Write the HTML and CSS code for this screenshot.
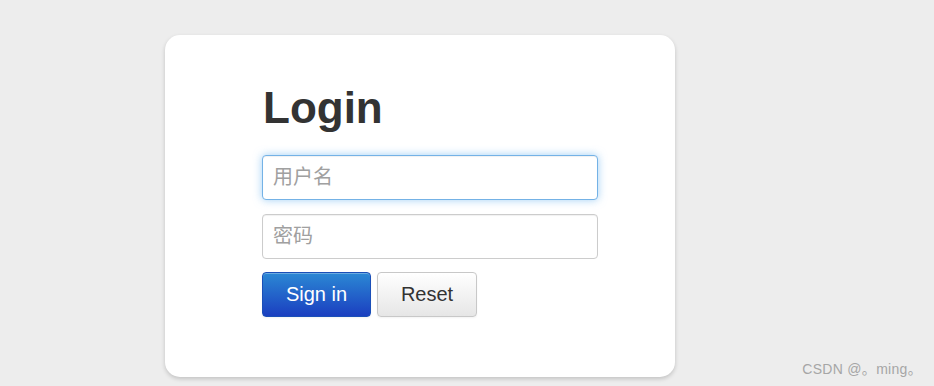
FILE: index.html
```html
<!DOCTYPE html>
<html>
	<head>
		<meta charset="utf-8" />
		<title>Login</title>
		<link rel="stylesheet" href="styles.css">
	</head>
	<body>
		<div class="login-box">
			<h1 class="title">Login</h1>
			<form class="login-form">
				<input type="text" class="field focus" placeholder="用户名">
				<input type="password" class="field" placeholder="密码">
				<div class="actions">
					<button type="button" class="btn btn-primary">Sign in</button>
					<button type="reset" class="btn">Reset</button>
				</div>
			</form>
		</div>
		<div class="mark">CSDN @。ming。</div>
	</body>
</html>
```
FILE: styles.css
```css
* {
	padding: 0px;
	margin: 0px;
	box-sizing: border-box;
}
html,
body {
	height: 100%;
}
body {
	background-color: #ededed;
	font-family: "Liberation Sans", Arial, "Noto Sans CJK SC", sans-serif;
	padding: 35px 0 0 165px;
	position: relative;
	overflow: hidden;
}
.login-box {
	width: 510px;
	background-color: #fff;
	border-radius: 15px;
	box-shadow: 0 2px 4px rgba(0, 0, 0, 0.18);
	padding: 48px 77px 60px 97px;
}
.title {
	font-size: 44px;
	line-height: 50px;
	font-weight: bold;
	color: #333;
	margin-bottom: 22px;
	padding-left: 1px;
}
.login-form {
	display: flex;
	flex-direction: column;
}
.field {
	width: 336px;
	height: 45px;
	border: 1px solid #ccc;
	border-radius: 4px;
	padding: 0 10px;
	font-size: 20px;
	font-family: "Liberation Sans", Arial, "Noto Sans CJK SC", sans-serif;
	color: #555;
	margin-bottom: 14px;
	outline: none;
	box-shadow: inset 0 1px 1px rgba(0, 0, 0, 0.06);
}
.field::placeholder {
	color: #a0a0a0;
}
.field.focus {
	border-color: #74b2e6;
	box-shadow: inset 0 1px 1px rgba(0, 0, 0, 0.06), 0 0 8px rgba(82, 168, 236, 0.55);
}
.actions {
	display: flex;
	gap: 6px;
	margin-top: -1px;
}
.btn {
	height: 45px;
	width: 100px;
	border: 1px solid #c8c8c8;
	border-radius: 4px;
	font-size: 20px;
	font-family: "Liberation Sans", Arial, sans-serif;
	color: #333;
	background: linear-gradient(#ffffff, #e6e6e6);
	box-shadow: inset 0 1px 0 rgba(255, 255, 255, 0.3), 0 1px 2px rgba(0, 0, 0, 0.05);
	cursor: pointer;
}
.btn-primary {
	width: 109px;
	color: #fff;
	border-color: #1a4fb8;
	background: linear-gradient(#2b88d4, #1b3fc0);
}
.mark {
	position: absolute;
	right: 12px;
	bottom: 8px;
	font-size: 14px;
	color: #a6a6a6;
	letter-spacing: 0.3px;
}
```
